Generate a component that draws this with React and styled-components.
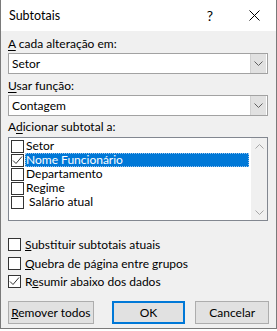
import React from "react";
import styled, { createGlobalStyle } from "styled-components";

const GlobalStyle = createGlobalStyle`
  html, body {
    margin: 0;
    padding: 0;
    background: #ffffff;
  }
  * {
    box-sizing: border-box;
  }
`;

const Dialog = styled.div`
  width: 277px;
  height: 329px;
  background: #f0f0f0;
  border: 1px solid #7a7a7a;
  border-top: none;
  font-family: Lato, "Noto Sans", "Liberation Sans", sans-serif;
  font-size: 12px;
  color: #000;
  display: flex;
  flex-direction: column;
`;

const TitleBar = styled.div`
  height: 31px;
  background: #ffffff;
  display: flex;
  align-items: center;
  padding-left: 8px;
`;

const Title = styled.div`
  flex: 1;
  font-size: 12.5px;
`;

const TitleButton = styled.div`
  width: 44px;
  height: 31px;
  display: flex;
  align-items: center;
  justify-content: center;
  font-size: 14px;
`;

const Body = styled.div`
  padding: 5px 7px 0 7px;
  display: flex;
  flex-direction: column;
`;

const Label = styled.div`
  line-height: 16px;
  height: 16px;
  margin-bottom: ${(p) => p.$gap || 1}px;
  white-space: nowrap;
  u {
    text-decoration-thickness: 1px;
    text-underline-offset: 2px;
  }
`;

const Select = styled.div`
  height: 21px;
  background: #fff;
  border: 1px solid #a2a2a2;
  display: flex;
  align-items: center;
  padding-left: 3px;
  margin-right: 1px;
  margin-bottom: ${(p) => p.$gap || 0}px;
`;

const SelectText = styled.div`
  flex: 1;
  line-height: 16px;
`;

const ArrowBox = styled.div`
  width: 16px;
  height: 19px;
  background: #e1e1e1;
  border-left: 1px solid #d0d0d0;
  margin-right: 1px;
  display: flex;
  align-items: center;
  justify-content: center;
`;

const ListBox = styled.div`
  height: 84px;
  background: #fff;
  border: 1px solid #828790;
  margin-right: 1px;
  display: flex;
  margin-bottom: 17px;
`;

const ListItems = styled.div`
  flex: 1;
  padding: 1px 0 0 2px;
  display: flex;
  flex-direction: column;
`;

const ListRow = styled.div`
  height: 14px;
  display: flex;
  align-items: center;
`;

const ItemText = styled.div`
  height: 14px;
  line-height: 14px;
  padding: 0 2px 0 1px;
  white-space: pre;
  ${(p) =>
    p.$selected &&
    `
    flex: 1;
    background: #0078d7;
    color: #fff;
    outline: 1px dotted #9ac4ec;
    outline-offset: -1px;
  `}
`;

const ScrollBar = styled.div`
  width: 16px;
  background: #f0f0f0;
  margin-left: 2px;
  display: flex;
  flex-direction: column;
  justify-content: space-between;
  align-items: center;
  padding: 6px 0 5px;
`;

const Box = styled.div`
  width: 13px;
  height: 13px;
  border: 1px solid #333;
  background: #fff;
  flex-shrink: 0;
  display: flex;
  align-items: center;
  justify-content: center;
  margin-right: ${(p) => p.$gap || 1}px;
`;

const CheckRow = styled.div`
  display: flex;
  align-items: center;
  height: 13px;
  margin-bottom: ${(p) => p.$gap || 0}px;
  line-height: 16px;
  white-space: nowrap;
`;

const ButtonRow = styled.div`
  display: flex;
  margin-top: 13px;
`;

const Button = styled.div`
  height: 23px;
  width: ${(p) => p.$w}px;
  margin-right: ${(p) => p.$mr || 0}px;
  background: #e1e1e1;
  border: ${(p) => (p.$default ? "2px solid #0078d7" : "1px solid #adadad")};
  display: flex;
  align-items: center;
  justify-content: center;
  line-height: 16px;
  white-space: nowrap;
`;

const Chevron = ({ up, color = "#606060" }) => (
  <svg width="9" height="5" viewBox="0 0 9 5">
    <path
      d={up ? "M0.5 4.5 L4.5 0.5 L8.5 4.5" : "M0.5 0.5 L4.5 4.5 L8.5 0.5"}
      fill="none"
      stroke={color}
      strokeWidth="1"
    />
  </svg>
);

const Check = ({ color = "#333" }) => (
  <svg width="11" height="11" viewBox="0 0 11 11">
    <path d="M1 5.5 L4 8.5 L10 1.5" fill="none" stroke={color} strokeWidth="1" />
  </svg>
);

const items = [
  { label: "Setor" },
  { label: "Nome Funcionário", checked: true, selected: true },
  { label: "Departamento" },
  { label: "Regime" },
  { label: " Salário atual", pad: 3 },
];

function App() {
  return (
    <>
      <GlobalStyle />
      <Dialog>
        <TitleBar>
          <Title>Subtotais</Title>
          <TitleButton>?</TitleButton>
          <TitleButton>
            <svg width="11" height="11" viewBox="0 0 11 11">
              <path d="M0.5 0.5 L10.5 10.5 M10.5 0.5 L0.5 10.5" stroke="#000" strokeWidth="1" />
            </svg>
          </TitleButton>
        </TitleBar>
        <Body>
          <Label>
            <u>A</u> cada alteração em:
          </Label>
          <Select $gap={4}>
            <SelectText>Setor</SelectText>
            <ArrowBox>
              <Chevron />
            </ArrowBox>
          </Select>
          <Label $gap={1}>
            <u>U</u>sar função:
          </Label>
          <Select $gap={3}>
            <SelectText>Contagem</SelectText>
            <ArrowBox>
              <Chevron />
            </ArrowBox>
          </Select>
          <Label $gap={2}>
            A<u>d</u>icionar subtotal a:
          </Label>
          <ListBox>
            <ListItems>
              {items.map((it) => (
                <ListRow key={it.label}>
                  <Box $gap={it.pad ? 0 : 1}>{it.checked && <Check />}</Box>
                  <ItemText $selected={it.selected}>{it.label}</ItemText>
                </ListRow>
              ))}
            </ListItems>
            <ScrollBar>
              <Chevron up color="#a6a6a6" />
              <Chevron color="#a6a6a6" />
            </ScrollBar>
          </ListBox>
          <CheckRow $gap={6}>
            <Box $gap={4} />
            <span>
              <u>S</u>ubstituir subtotais atuais
            </span>
          </CheckRow>
          <CheckRow $gap={5}>
            <Box $gap={4} />
            <span>
              <u>Q</u>uebra de página entre grupos
            </span>
          </CheckRow>
          <CheckRow>
            <Box $gap={4}>
              <Check />
            </Box>
            <span>
              R<u>e</u>sumir abaixo dos dados
            </span>
          </CheckRow>
          <ButtonRow>
            <Button $w={86} $mr={18}>
              <span>
                <u>R</u>emover todos
              </span>
            </Button>
            <Button $w={74} $mr={10} $default>
              OK
            </Button>
            <Button $w={74}>Cancelar</Button>
          </ButtonRow>
        </Body>
      </Dialog>
    </>
  );
}

export default App;
